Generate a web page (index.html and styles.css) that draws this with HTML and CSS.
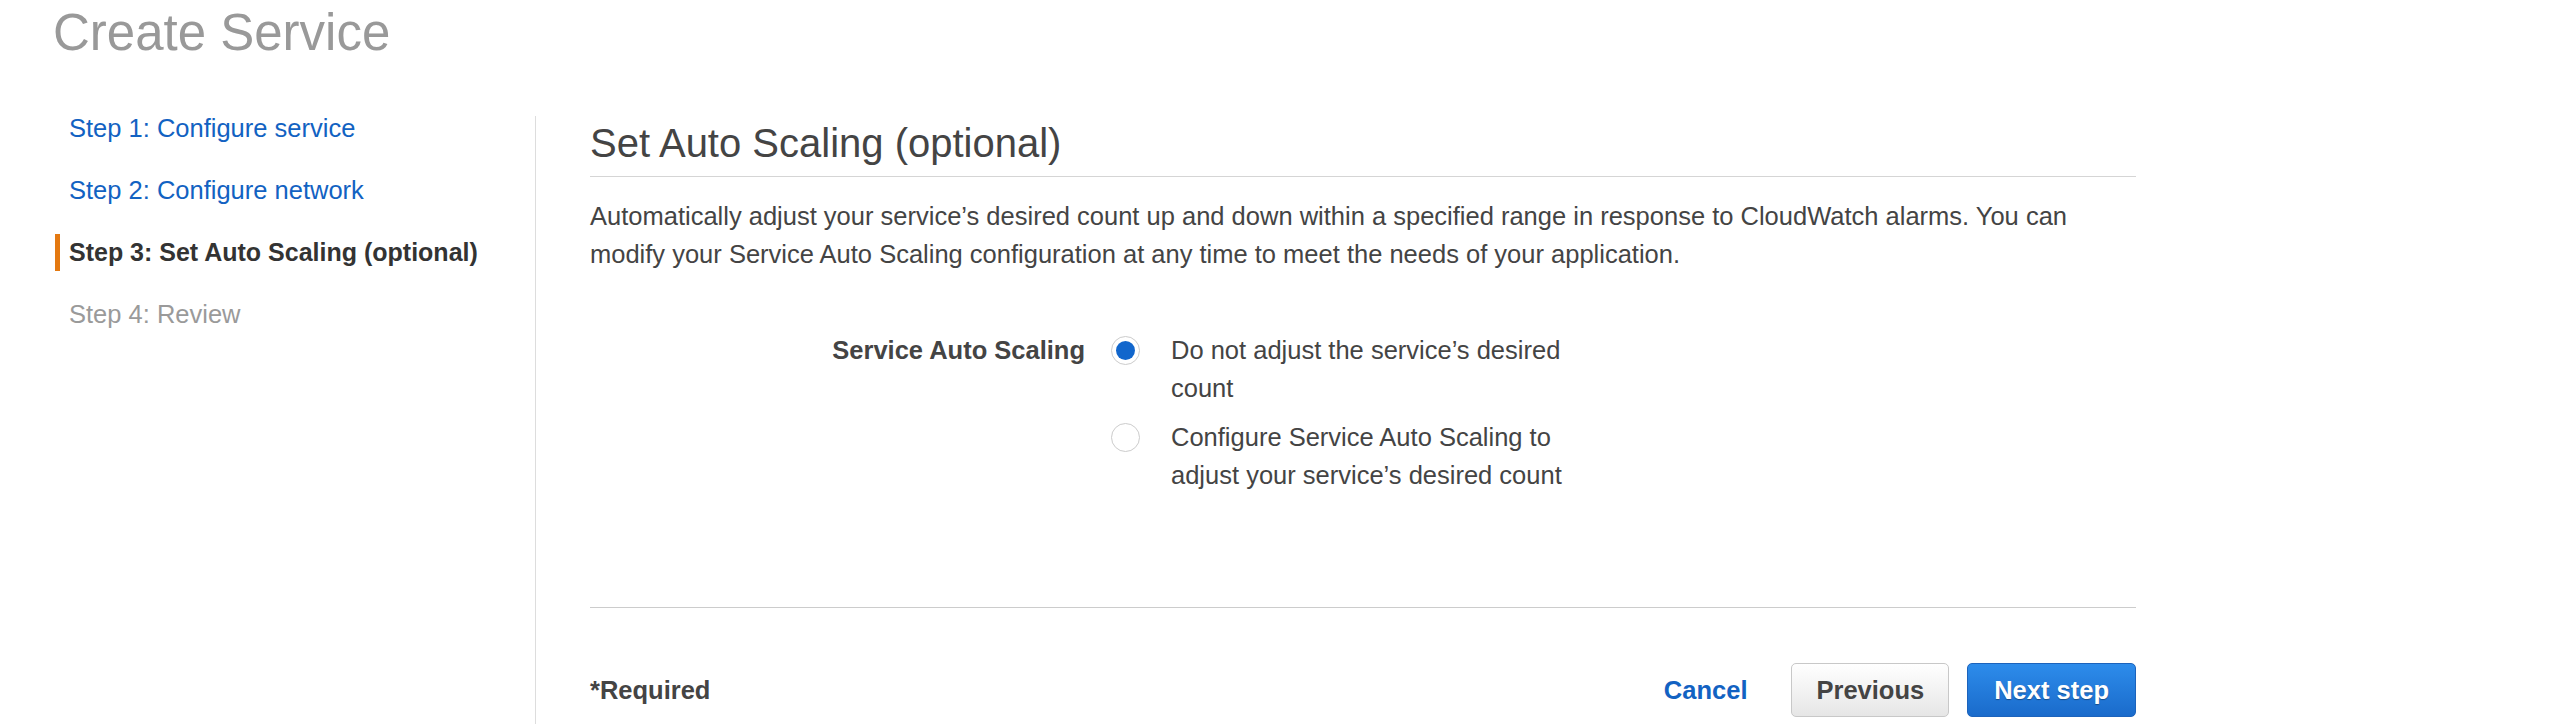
FILE: index.html
```html
<!DOCTYPE html>
<html lang="en">
<head>
<meta charset="utf-8">
<title>Create Service</title>
<link rel="stylesheet" href="styles.css">
</head>
<body>
<div class="page">
  <h1 class="page-title">Create Service</h1>
  <div class="layout">
    <nav class="steps">
      <a class="step step-link" href="#">Step 1: Configure service</a>
      <a class="step step-link" href="#">Step 2: Configure network</a>
      <span class="step step-active">Step 3: Set Auto Scaling (optional)</span>
      <span class="step step-disabled">Step 4: Review</span>
    </nav>
    <main class="content">
      <div class="content-inner">
        <h2 class="section-title">Set Auto Scaling (optional)</h2>
        <p class="intro">Automatically adjust your service’s desired count up and down within a specified range in response to CloudWatch alarms. You can modify your Service Auto Scaling configuration at any time to meet the needs of your application.</p>
        <div class="form-row">
          <div class="form-label">Service Auto Scaling</div>
          <div class="options">
            <label class="option">
              <span class="radio radio-checked"><span class="radio-dot"></span></span>
              <span class="option-text">Do not adjust the service’s desired count</span>
            </label>
            <label class="option">
              <span class="radio"></span>
              <span class="option-text">Configure Service Auto Scaling to adjust your service’s desired count</span>
            </label>
          </div>
        </div>
        <div class="footer">
          <span class="required">*Required</span>
          <div class="actions">
            <a class="btn-link" href="#">Cancel</a>
            <button class="btn btn-secondary" type="button">Previous</button>
            <button class="btn btn-primary" type="button">Next step</button>
          </div>
        </div>
      </div>
    </main>
  </div>
</div>
</body>
</html>
```
FILE: styles.css
```css
html, body {
  margin: 0;
  padding: 0;
  height: 100%;
  overflow: hidden;
  background: #ffffff;
}

body {
  font-family: "Liberation Sans", Arial, Helvetica, sans-serif;
  font-size: 25.5px;
  line-height: 38px;
  color: #444444;
}

.page {
  min-height: 100vh;
  display: flex;
  flex-direction: column;
}

.page-title {
  margin: 3px 0 48px 53px;
  font-size: 51px;
  line-height: 59px;
  font-weight: normal;
  color: #999999;
}

.layout {
  flex: 1;
  display: flex;
  align-items: stretch;
}

.steps {
  width: 480px;
  padding-left: 55px;
  display: flex;
  flex-direction: column;
  gap: 25px;
}

.step {
  display: block;
  height: 37px;
  line-height: 37px;
  padding-left: 9px;
  border-left: 5px solid transparent;
  text-decoration: none;
  white-space: nowrap;
}

.step-link {
  color: #1262c2;
}

.step-active {
  border-left-color: #e47911;
  color: #333333;
  font-weight: bold;
  font-size: 25px;
}

.step-disabled {
  color: #9a9a9a;
}

.content {
  margin-top: 6px;
  border-left: 1px solid #dddddd;
  padding-left: 54px;
  padding-top: 4px;
}

.content-inner {
  width: 1546px;
}

.section-title {
  margin: 0;
  font-size: 40px;
  line-height: 46px;
  font-weight: normal;
  color: #444444;
  padding-bottom: 10px;
  border-bottom: 1px solid #d5d5d5;
}

.intro {
  margin: 20px 0 0 0;
}

.form-row {
  display: flex;
  margin-top: 58px;
}

.form-label {
  width: 495px;
  text-align: right;
  font-weight: bold;
}

.options {
  margin-left: 26px;
  display: flex;
  flex-direction: column;
  gap: 11px;
}

.option {
  display: flex;
  align-items: flex-start;
}

.radio {
  box-sizing: border-box;
  width: 29px;
  height: 29px;
  margin-top: 5px;
  border: 1px solid #cccccc;
  border-radius: 50%;
  background: #ffffff;
  display: flex;
  align-items: center;
  justify-content: center;
  flex: none;
}

.radio-dot {
  width: 19px;
  height: 19px;
  border-radius: 50%;
  background: #1166cc;
}

.option-text {
  margin-left: 31px;
  width: 420px;
}

.footer {
  margin-top: 113px;
  border-top: 1px solid #cccccc;
  padding-top: 55px;
  display: flex;
  align-items: center;
  justify-content: space-between;
}

.required {
  font-weight: bold;
  color: #444444;
}

.actions {
  display: flex;
  align-items: center;
}

.btn-link {
  color: #1262c2;
  font-weight: bold;
  text-decoration: none;
  margin-right: 44px;
}

.btn {
  font-family: inherit;
  font-size: 25.5px;
  line-height: 38px;
  font-weight: bold;
  padding: 7px 24px;
  border-radius: 5px;
  cursor: pointer;
}

.btn-secondary {
  color: #444444;
  background: linear-gradient(#ffffff, #e6e6e6);
  border: 1px solid #c8c8c8;
  margin-right: 18px;
}

.btn-primary {
  color: #ffffff;
  padding: 7px 26px;
  background: linear-gradient(#2d8ceb, #1a6bcb);
  border: 1px solid #1c63bc;
  text-shadow: 0 1px 1px rgba(0, 0, 0, 0.35);
}
```
